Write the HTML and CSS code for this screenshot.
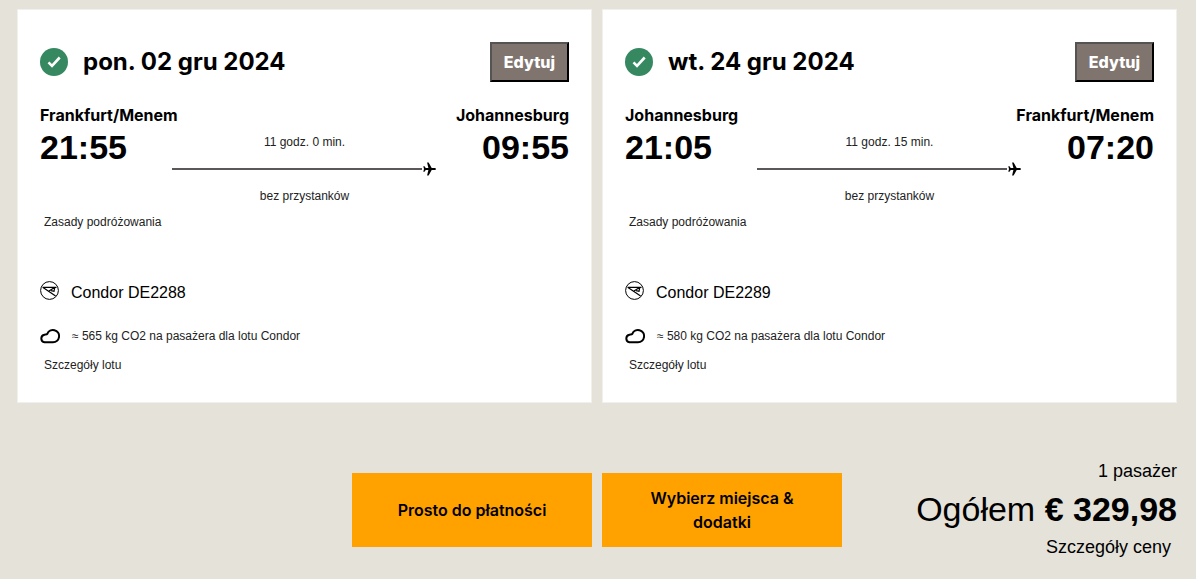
FILE: index.html
```html
<!DOCTYPE html>
<html lang="pl">
<head>
  <meta charset="UTF-8" />
  <meta name="viewport" content="width=device-width, initial-scale=1.0"/>
  <title>Podsumowanie lotów</title>
  <link rel="stylesheet" href="styles.css">
</head>
<body>
  <!-- Shared icons -->
  <svg class="icon-defs" aria-hidden="true">
    <symbol id="icon-check" viewBox="0 0 28 28">
      <circle cx="14" cy="14" r="14" fill="#35885f"/>
      <path d="M8.500 14.300l3.500 3.500 7.700-8.300" fill="none" stroke="#fff" stroke-width="2.600"/>
    </symbol>
    <symbol id="icon-plane" viewBox="0 0 14 14">
      <path d="M13 7c0-.7-.8-1.100-1.600-1.100H8.700L5.600.500H4.100l1.300 5.400H2.700L1.500 4.300H.300L1 7 .300 9.700h1.200l1.200-1.600h2.700l-1.300 5.400h1.500l3.100-5.400h2.700c.8 0 1.600-.4 1.600-1.100z"/>
    </symbol>
    <symbol id="icon-condor" viewBox="0 0 19 19">
      <circle cx="9.500" cy="9.500" r="8.900" fill="none" stroke="#000" stroke-width="1"/>
      <path d="M2.500 6.300h14M3 6.500l12.600 8.500M9 10l5.500-3.500M14.800 6.500l-.8 3.800-3-.6" fill="none" stroke="#000" stroke-width="1.200"/>
    </symbol>
    <symbol id="icon-cloud" viewBox="0 0 20 16">
      <path d="M4.500 14.200H13A6.100 6.100 0 1 0 7.300 5.900C6.700 6.700 5.600 6.500 4.500 6.700A3.800 3.800 0 0 0 4.500 14.200z" fill="none" stroke="#000" stroke-width="2"/>
    </symbol>
  </svg>

  <main class="flights">
    <section class="flight-card">
      <div class="card-header">
        <svg class="check-icon" aria-hidden="true"><use href="#icon-check"/></svg>
        <h2>pon. 02 gru 2024</h2>
        <button type="button" class="edit-btn">Edytuj</button>
      </div>
      <div class="cities">
        <span>Frankfurt/Menem</span>
        <span>Johannesburg</span>
      </div>
      <div class="route">
        <div class="time">21:55</div>
        <div class="route-middle">
          <span>11 godz. 0 min.</span>
          <div class="route-line">
            <svg class="plane-icon" aria-hidden="true"><use href="#icon-plane"/></svg>
          </div>
          <span>bez przystanków</span>
        </div>
        <div class="time arrival">09:55</div>
      </div>
      <a href="#" class="card-link">Zasady podróżowania</a>
      <div class="airline">
        <svg class="condor-icon" aria-hidden="true"><use href="#icon-condor"/></svg>
        <span>Condor DE2288</span>
      </div>
      <div class="emission">
        <svg class="cloud-icon" aria-hidden="true"><use href="#icon-cloud"/></svg>
        <span>≈ 565 kg CO2 na pasażera dla lotu Condor</span>
      </div>
      <a href="#" class="card-link details-link">Szczegóły lotu</a>
    </section>

    <section class="flight-card">
      <div class="card-header">
        <svg class="check-icon" aria-hidden="true"><use href="#icon-check"/></svg>
        <h2>wt. 24 gru 2024</h2>
        <button type="button" class="edit-btn">Edytuj</button>
      </div>
      <div class="cities">
        <span>Johannesburg</span>
        <span>Frankfurt/Menem</span>
      </div>
      <div class="route">
        <div class="time">21:05</div>
        <div class="route-middle">
          <span>11 godz. 15 min.</span>
          <div class="route-line">
            <svg class="plane-icon" aria-hidden="true"><use href="#icon-plane"/></svg>
          </div>
          <span>bez przystanków</span>
        </div>
        <div class="time arrival">07:20</div>
      </div>
      <a href="#" class="card-link">Zasady podróżowania</a>
      <div class="airline">
        <svg class="condor-icon" aria-hidden="true"><use href="#icon-condor"/></svg>
        <span>Condor DE2289</span>
      </div>
      <div class="emission">
        <svg class="cloud-icon" aria-hidden="true"><use href="#icon-cloud"/></svg>
        <span>≈ 580 kg CO2 na pasażera dla lotu Condor</span>
      </div>
      <a href="#" class="card-link details-link">Szczegóły lotu</a>
    </section>
  </main>

  <footer class="summary">
    <div class="actions">
      <button type="button" class="action-btn">Prosto do płatności</button>
      <button type="button" class="action-btn">Wybierz miejsca &amp; dodatki</button>
    </div>
    <div class="price">
      <span class="passengers">1 pasażer</span>
      <span class="total">Ogółem <strong>€ 329,98</strong></span>
      <a href="#" class="price-link">Szczegóły ceny</a>
    </div>
  </footer>
</body>
</html>
```

FILE: styles.css
```css
* {
  box-sizing: border-box;
}

body {
  margin: 0;
  padding: 9px 19px 0 17px;
  font-family: "Liberation Sans", Arial, sans-serif;
  font-size: 16px;
  color: #000;
  background-color: #e5e2da;
}

a {
  color: inherit;
  text-decoration: none;
}

.icon-defs {
  display: none;
}

/* Flight cards */
.flights {
  display: grid;
  grid-template-columns: 1fr 1fr;
  gap: 10px;
}

.flight-card {
  display: flex;
  flex-direction: column;
  padding: 32px 22px 27px;
  background: #fff;
  border: 1px solid #f2f0ec;
}

.card-header {
  display: flex;
  align-items: center;
  gap: 15px;
}

.card-header h2 {
  flex: 1;
  margin: 0;
  font-family: Inter, sans-serif;
  font-size: 24px;
  font-weight: 700;
  line-height: 30px;
}

.check-icon {
  width: 28px;
  height: 28px;
}

.edit-btn {
  height: 40px;
  padding: 0 12px;
  font-family: Inter, sans-serif;
  font-size: 16px;
  font-weight: 800;
  color: #fff;
  background: #80756e;
  border: 2px outset #000;
  cursor: pointer;
}

.cities {
  display: flex;
  justify-content: space-between;
  margin-top: 21px;
  font-family: Inter, sans-serif;
  font-size: 16px;
  font-weight: 700;
  line-height: 24px;
}

.route {
  display: grid;
  grid-template-columns: 1fr 2fr 1fr;
}

.time {
  font-size: 34px;
  font-weight: 700;
  line-height: 40px;
}

.arrival {
  text-align: right;
}

.route-middle {
  display: flex;
  flex-direction: column;
  padding-top: 5px;
  font-size: 12px;
  line-height: 20px;
  text-align: center;
  color: #222;
}

.route-line {
  display: flex;
  align-items: center;
  gap: 1px;
  height: 34px;
}

.route-line::before {
  content: "";
  flex: 1;
  height: 2px;
  background: #5c5759;
}

.plane-icon {
  width: 14px;
  height: 14px;
}

.card-link {
  align-self: flex-start;
  padding: 0 4px;
  margin-top: 6px;
  font-size: 12px;
  line-height: 20px;
  color: #222;
}

.airline,
.emission {
  display: flex;
  align-items: center;
  gap: 12px;
}

.airline {
  align-items: flex-start;
  margin-top: 49px;
  line-height: 24px;
}

.emission {
  margin-top: 21px;
  font-size: 12px;
  line-height: 20px;
  color: #222;
}

.details-link {
  margin-top: 9px;
}

.condor-icon {
  width: 19px;
  height: 19px;
}

.cloud-icon {
  width: 20px;
  height: 16px;
}

/* Buttons and total price */
.summary {
  display: grid;
  grid-template-columns: 1fr auto 1fr;
  margin-top: 56px;
}

.actions {
  grid-column: 2;
  display: flex;
  gap: 10px;
  padding-top: 14px;
}

.action-btn {
  width: 240px;
  height: 74px;
  padding: 0 40px;
  font-family: Inter, sans-serif;
  font-size: 16px;
  font-weight: 600;
  line-height: 24px;
  color: #000;
  background: #ffa200;
  border: none;
  cursor: pointer;
}

.price {
  display: flex;
  flex-direction: column;
  align-items: flex-end;
}

.passengers,
.price-link {
  font-size: 18px;
  line-height: 24px;
}

.total {
  font-size: 34px;
  line-height: 52px;
  white-space: nowrap;
}

.price-link {
  padding: 0 6px;
}
```
